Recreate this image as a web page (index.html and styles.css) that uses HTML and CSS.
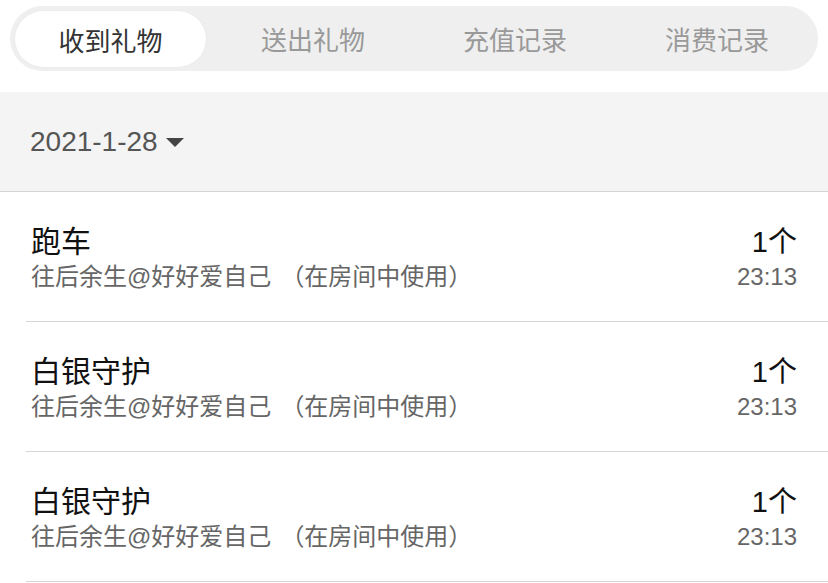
FILE: index.html
```html
<!DOCTYPE html>
<html lang="zh-CN">
<head>
<meta charset="UTF-8">
<meta name="viewport" content="width=device-width, initial-scale=1.0">
<title>礼物记录</title>
<link rel="stylesheet" href="styles.css">
</head>
<body>
    <div class="tabs">
        <div class="tab active">收到礼物</div>
        <div class="tab">送出礼物</div>
        <div class="tab">充值记录</div>
        <div class="tab">消费记录</div>
    </div>

    <div class="date-bar">
        <span class="date">2021-1-28</span>
        <span class="arrow"></span>
    </div>

    <div class="list">
        <div class="item">
            <div class="info">
                <div class="name">跑车</div>
                <div class="desc">往后余生@好好爱自己<span class="note">（在房间中使用）</span></div>
            </div>
            <div class="meta">
                <div class="count">1个</div>
                <div class="time">23:13</div>
            </div>
        </div>
        <div class="item">
            <div class="info">
                <div class="name">白银守护</div>
                <div class="desc">往后余生@好好爱自己<span class="note">（在房间中使用）</span></div>
            </div>
            <div class="meta">
                <div class="count">1个</div>
                <div class="time">23:13</div>
            </div>
        </div>
        <div class="item">
            <div class="info">
                <div class="name">白银守护</div>
                <div class="desc">往后余生@好好爱自己<span class="note">（在房间中使用）</span></div>
            </div>
            <div class="meta">
                <div class="count">1个</div>
                <div class="time">23:13</div>
            </div>
        </div>
    </div>
</body>
</html>
```

FILE: styles.css
```css
body{
    margin: 0;
    background-color: #fff;
    font-family: "Liberation Sans", "Noto Sans CJK SC", sans-serif;
}
.tabs{
    display: grid;
    grid-template-columns: repeat(4, 1fr);
    margin: 6px 10px 0 10px;
    height: 65px;
    background-color: #efefef;
    border-radius: 33px;
}
.tab{
    display: flex;
    justify-content: center;
    align-items: center;
    font-family: "Noto Sans CJK SC", sans-serif;
    font-size: 26px;
    color: #999;
}
.tab.active{
    margin: 5px 6px 4px 5px;
    background-color: #fff;
    color: #333;
    border-radius: 28px;
    box-shadow: 0 0 2px rgba(0, 0, 0, 0.06);
}
.date-bar{
    display: flex;
    align-items: center;
    margin-top: 21px;
    height: 99px;
    padding-left: 30px;
    background-color: #f4f4f4;
    border-bottom: 1px solid #d4d4d4;
}
.date{
    font-size: 28px;
    color: #555;
}
.arrow{
    margin-left: 8px;
    margin-top: 2px;
    width: 0;
    height: 0;
    border-left: 9px solid transparent;
    border-right: 9px solid transparent;
    border-top: 9px solid #444;
}
.item{
    display: flex;
    justify-content: space-between;
    align-items: center;
    height: 130px;
    box-sizing: border-box;
    margin-left: 26px;
    padding: 4px 31px 0 5px;
    border-bottom: 1px solid #d6d6d6;
}
.name{
    font-size: 30px;
    line-height: 36px;
    color: #111;
}
.desc{
    font-size: 24px;
    line-height: 34px;
    color: #666;
}
.note{
    margin-left: 9px;
}
.meta{
    text-align: right;
}
.count{
    font-size: 29px;
    line-height: 36px;
    color: #111;
}
.time{
    font-size: 24px;
    line-height: 34px;
    color: #666;
}
```
